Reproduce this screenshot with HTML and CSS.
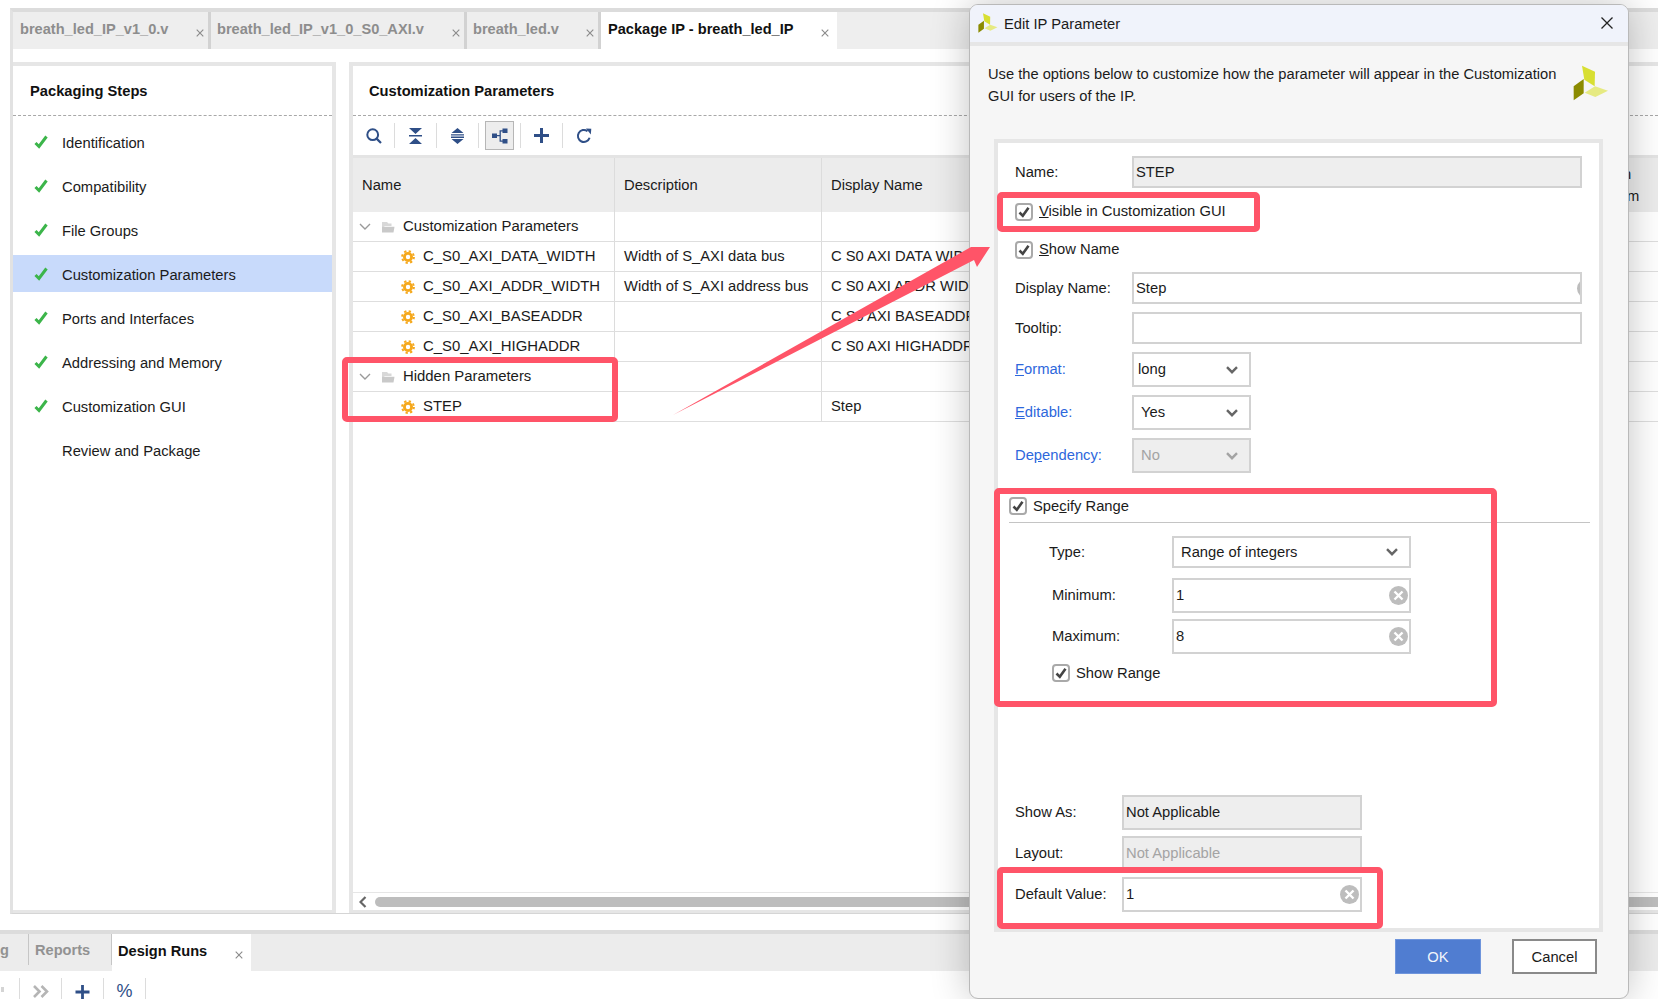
FILE: index.html
```html
<!DOCTYPE html>
<html lang="en">
<head>
<meta charset="utf-8">
<title>Edit IP Parameter</title>
<link rel="stylesheet" href="styles.css">
</head>
<body>
<svg class="defs" width="0" height="0" aria-hidden="true">
  <symbol id="i-check" viewBox="0 0 14 14"><path d="M1.5 8 L5 11.5 L12.5 1.5" fill="none" stroke="#3cb54a" stroke-width="3"/></symbol>
  <symbol id="i-x" viewBox="0 0 8 8"><path d="M.7 .7 L7.3 7.3 M7.3 .7 L.7 7.3" fill="none" stroke="#8a8a8a" stroke-width="1.1"/></symbol>
  <symbol id="i-gear" viewBox="0 0 14 14"><circle cx="7" cy="7" r="3.6" fill="none" stroke="#f5a81c" stroke-width="2.8"/><circle cx="7" cy="7" r="5.9" fill="none" stroke="#f5a81c" stroke-width="2" stroke-dasharray="2.3 2.33"/></symbol>
  <symbol id="i-folder" viewBox="0 0 14 14"><path d="M1 2 H6 L7.5 3.5 H10.5 V6 H4 L1 8 Z" fill="#d8d8d8"/><path d="M1 6.8 H13.5 L12.5 12.5 H1 Z" fill="#c9c9c9"/></symbol>
  <symbol id="i-chev" viewBox="0 0 12 7"><path d="M1 1 L6 6 L11 1" fill="none" stroke="#9a9a9a" stroke-width="1.4"/></symbol>
  <symbol id="i-drop" viewBox="0 0 12 8"><path d="M1 1.2 L6 6.2 L11 1.2" fill="none" stroke="#666" stroke-width="2.4"/></symbol>
  <symbol id="i-clear" viewBox="0 0 19 19"><circle cx="9.5" cy="9.5" r="9.5" fill="#bdbdbd"/><path d="M5.5 5.5 L13.5 13.5 M13.5 5.5 L5.5 13.5" stroke="#fff" stroke-width="2.4"/></symbol>
  <symbol id="i-box" viewBox="0 0 18 18"><rect x="1" y="1" width="16" height="16" rx="3" fill="#fff" stroke="#a9a9a9" stroke-width="2"/><path d="M4.5 9.5 L7.8 12.8 L13.5 4.8" fill="none" stroke="#444" stroke-width="2.6"/></symbol>
  <symbol id="i-logo" viewBox="38 196 108 108"><path d="M65 198 L104 216 L103 260 L72 240 Z" fill="#d8df32"/><path d="M143 273 L105 292 L73 279 L104 260 Z" fill="#e6ea82"/><path d="M70 238 L70 281 L40 302 L40 260 Z" fill="#8b8b00"/></symbol>
  <symbol id="t-search" viewBox="0 0 16 16"><circle cx="6.7" cy="6.7" r="5.4" fill="none" stroke="#2f4f87" stroke-width="2"/><path d="M10.6 10.6 L15 15" stroke="#2f4f87" stroke-width="2.2"/></symbol>
  <symbol id="t-collapse" viewBox="0 0 13 16"><path d="M0 0 H13 L6.5 6 Z M0 7 H13 V8.6 H0 Z M0 16 H13 L6.5 10 Z" fill="#2f4f87"/></symbol>
  <symbol id="t-expand" viewBox="0 0 13 16"><path d="M6.5 0 L12.5 5 H.5 Z M0 6.2 H13 V7.6 H0 Z M0 8.6 H13 V10 H0 Z M.5 11 H12.5 L6.5 16 Z" fill="#2f4f87"/></symbol>
  <symbol id="t-tree" viewBox="0 0 16 16"><path d="M0 5.5 H5 V10 H0 Z M10.5 .5 H15.5 V5 H10.5 Z M10.5 11 H15.5 V15.5 H10.5 Z" fill="#2f4f87"/><path d="M5 7.7 H8.2 V2.8 H11 M8.2 7.7 V13.2 H11" fill="none" stroke="#2f4f87" stroke-width="1.3"/></symbol>
  <symbol id="t-plus" viewBox="0 0 15 15"><path d="M7.5 0 V15 M0 7.5 H15" stroke="#2f4f87" stroke-width="3"/></symbol>
  <symbol id="t-refresh" viewBox="0 0 16 16"><path d="M13.6 9.8 A6 6 0 1 1 11.5 3.2" fill="none" stroke="#2f4f87" stroke-width="2"/><path d="M10 0.5 L15.3 0.8 L14.8 6.4 Z" fill="#2f4f87"/></symbol>
  <symbol id="t-more" viewBox="0 0 16 13"><path d="M1 1 L6.5 6.5 L1 12 M8.5 1 L14 6.5 L8.5 12" fill="none" stroke="#b5b5b5" stroke-width="2.6"/></symbol>
</svg>

<div class="app">
  <section class="editor">
    <div class="tabs">
      <div class="tab tab-a"><span>breath_led_IP_v1_0.v</span><svg class="tab-x"><use href="#i-x"/></svg></div>
      <div class="tab tab-b"><span>breath_led_IP_v1_0_S0_AXI.v</span><svg class="tab-x"><use href="#i-x"/></svg></div>
      <div class="tab tab-c"><span>breath_led.v</span><svg class="tab-x"><use href="#i-x"/></svg></div>
      <div class="tab tab-d tab-active"><span>Package IP - breath_led_IP</span><svg class="tab-x"><use href="#i-x"/></svg></div>
    </div>
    <div class="panels">
      <aside class="steps">
        <h2 class="panel-title">Packaging Steps</h2>
        <ul class="step-list">
          <li class="step"><svg class="step-check"><use href="#i-check"/></svg>Identification</li>
          <li class="step"><svg class="step-check"><use href="#i-check"/></svg>Compatibility</li>
          <li class="step"><svg class="step-check"><use href="#i-check"/></svg>File Groups</li>
          <li class="step step-on"><svg class="step-check"><use href="#i-check"/></svg>Customization Parameters</li>
          <li class="step"><svg class="step-check"><use href="#i-check"/></svg>Ports and Interfaces</li>
          <li class="step"><svg class="step-check"><use href="#i-check"/></svg>Addressing and Memory</li>
          <li class="step"><svg class="step-check"><use href="#i-check"/></svg>Customization GUI</li>
          <li class="step"><span class="step-blank"></span>Review and Package</li>
        </ul>
      </aside>
      <main class="params">
        <h2 class="panel-title panel-title-r">Customization Parameters</h2>
        <div class="toolbar">
          <div class="tool"><svg class="ic16"><use href="#t-search"/></svg></div>
          <div class="tool"><svg class="ic13"><use href="#t-collapse"/></svg></div>
          <div class="tool"><svg class="ic13"><use href="#t-expand"/></svg></div>
          <div class="tool"><span class="tool-on"><svg class="ic16"><use href="#t-tree"/></svg></span></div>
          <div class="tool"><svg class="ic15"><use href="#t-plus"/></svg></div>
          <div class="tool tool-last"><svg class="ic16"><use href="#t-refresh"/></svg></div>
        </div>
        <div class="grid">
          <div class="row row-head"><div class="cell">Name</div><div class="cell">Description</div><div class="cell">Display Name</div><div class="cell cell-tail"><span class="tail-n">n</span><span class="tail-m">m</span></div></div>
          <div class="row"><div class="cell cell-group"><svg class="chev"><use href="#i-chev"/></svg><svg class="folder"><use href="#i-folder"/></svg>Customization Parameters</div><div class="cell"></div><div class="cell"></div><div class="cell"></div></div>
          <div class="row"><div class="cell cell-param"><svg class="gear"><use href="#i-gear"/></svg>C_S0_AXI_DATA_WIDTH</div><div class="cell">Width of S_AXI data bus</div><div class="cell">C S0 AXI DATA WIDTH</div><div class="cell"></div></div>
          <div class="row"><div class="cell cell-param"><svg class="gear"><use href="#i-gear"/></svg>C_S0_AXI_ADDR_WIDTH</div><div class="cell">Width of S_AXI address bus</div><div class="cell">C S0 AXI ADDR WIDTH</div><div class="cell"></div></div>
          <div class="row"><div class="cell cell-param"><svg class="gear"><use href="#i-gear"/></svg>C_S0_AXI_BASEADDR</div><div class="cell"></div><div class="cell">C S0 AXI BASEADDR</div><div class="cell"></div></div>
          <div class="row"><div class="cell cell-param"><svg class="gear"><use href="#i-gear"/></svg>C_S0_AXI_HIGHADDR</div><div class="cell"></div><div class="cell">C S0 AXI HIGHADDR</div><div class="cell"></div></div>
          <div class="row"><div class="cell cell-group"><svg class="chev"><use href="#i-chev"/></svg><svg class="folder"><use href="#i-folder"/></svg>Hidden Parameters</div><div class="cell"></div><div class="cell"></div><div class="cell"></div></div>
          <div class="row"><div class="cell cell-param"><svg class="gear"><use href="#i-gear"/></svg>STEP</div><div class="cell"></div><div class="cell">Step</div><div class="cell"></div></div>
        </div>
        <div class="hscroll"><svg class="hscroll-left" viewBox="0 0 8 12"><path d="M6.5 1 L1.5 6 L6.5 11" fill="none" stroke="#666" stroke-width="2.2"/></svg><div class="hscroll-thumb"></div></div>
      </main>
    </div>
  </section>

  <section class="console">
    <div class="ctabs">
      <div class="ctab ctab-g">g</div>
      <div class="ctab ctab-r">Reports</div>
      <div class="ctab ctab-on"><span>Design Runs</span><svg class="tab-x"><use href="#i-x"/></svg></div>
    </div>
    <div class="ctools">
      <div class="ctool"><span class="ctool-stub"></span></div>
      <div class="ctool"><svg class="ic-more"><use href="#t-more"/></svg></div>
      <div class="ctool"><svg class="ic15"><use href="#t-plus"/></svg></div>
      <div class="ctool ctool-pct">%</div>
    </div>
  </section>
</div>

<div class="dialog">
  <header class="dlg-title">
    <svg class="dlg-logo-s"><use href="#i-logo"/></svg>
    <span class="dlg-name">Edit IP Parameter</span>
    <svg class="dlg-close" viewBox="0 0 12 12"><path d="M.5 .5 L11.5 11.5 M11.5 .5 L.5 11.5" stroke="#222" stroke-width="1.3"/></svg>
  </header>
  <div class="intro">
    <p class="intro-text">Use the options below to customize how the parameter will appear in the Customization GUI for users of the IP.</p>
    <svg class="intro-logo"><use href="#i-logo"/></svg>
  </div>
  <form class="form">
    <div class="f-row f-name"><label class="f-label">Name:</label><div class="field field-off f-wide f-h32">STEP</div></div>
    <label class="f-check f-visible"><svg class="box"><use href="#i-box"/></svg><span><u>V</u>isible in Customization GUI</span></label>
    <label class="f-check f-show"><svg class="box"><use href="#i-box"/></svg><span><u>S</u>how Name</span></label>
    <div class="f-row f-display"><label class="f-label">Display Name:</label><div class="field f-wide f-h32 field-clip">Step<svg class="clear-cut"><use href="#i-clear"/></svg></div></div>
    <div class="f-row f-tooltip"><label class="f-label">Tooltip:</label><div class="field f-wide f-h32"></div></div>
    <div class="f-row f-sel tall"><label class="f-label f-link"><u>F</u>ormat:</label><div class="select s-small">long<svg class="drop"><use href="#i-drop"/></svg></div></div>
    <div class="f-row f-sel tall"><label class="f-label f-link"><u>E</u>ditable:</label><div class="select s-small s-yes">Yes<svg class="drop"><use href="#i-drop"/></svg></div></div>
    <div class="f-row f-sel tall"><label class="f-label f-link">De<u>p</u>endency:</label><div class="select s-small s-yes s-off">No<svg class="drop drop-off"><use href="#i-drop"/></svg></div></div>

    <div class="range-head"><svg class="box"><use href="#i-box"/></svg><span>Spe<u>c</u>ify Range</span></div>
    <div class="r-row r-type"><label class="r-label r-label-t">Type:</label><div class="select s-wide">Range of integers<svg class="drop"><use href="#i-drop"/></svg></div></div>
    <div class="r-row r-min tall"><label class="r-label">Minimum:</label><div class="field r-field">1<svg class="clear"><use href="#i-clear"/></svg></div></div>
    <div class="r-row r-max tall"><label class="r-label">Maximum:</label><div class="field r-field">8<svg class="clear"><use href="#i-clear"/></svg></div></div>
    <label class="f-check r-show"><svg class="box"><use href="#i-box"/></svg><span>Show Range</span></label>

    <div class="f-row b-show tall"><label class="f-label b-label">Show As:</label><div class="field field-off b-field">Not Applicable</div></div>
    <div class="f-row b-next tall"><label class="f-label b-label">Layout:</label><div class="field field-off field-dim b-field">Not Applicable</div></div>
    <div class="f-row b-next tall"><label class="f-label b-label">Default Value:</label><div class="field b-field">1<svg class="clear"><use href="#i-clear"/></svg></div></div>
  </form>
  <div class="buttons">
    <div class="btn btn-ok">OK</div>
    <div class="btn btn-cancel">Cancel</div>
  </div>
</div>

<div class="mark mark-hidden"></div>
<div class="mark mark-visible"></div>
<div class="mark mark-range"></div>
<div class="mark mark-default"></div>
<svg class="arrow" viewBox="0 0 1658 999" aria-hidden="true"><polygon points="673,415 971,247 990,247 977,267 974,260" fill="#ff5468"/></svg>
</body>
</html>
```
FILE: styles.css
```css
* { box-sizing: border-box; }
html, body { margin: 0; padding: 0; }
body {
  position: relative;
  width: 1658px;
  height: 999px;
  overflow: hidden;
  background: #fff;
  color: #1b1b1b;
  font: 14.75px/20px "Liberation Sans", Arial, sans-serif;
}
.defs { position: absolute; }
ul { list-style: none; margin: 0; padding: 0; }
h2, p { margin: 0; }
svg { display: block; flex: none; }

.app { display: flex; flex-direction: column; height: 999px; padding-top: 8px; }

/* editor frame */
.editor {
  margin-left: 10px;
  height: 906px;
  flex: none;
  border-top: 4px solid #dcdcdc;
  border-left: 3px solid #e2e2e2;
  border-bottom: 1px solid #d5d5d5;
  display: flex;
  flex-direction: column;
}
.tabs { display: flex; height: 37px; background: #eeeeee; flex: none; }
.tab {
  display: flex;
  align-items: center;
  padding: 0 7px 3px 7px;
  color: #8d8d8d;
  font-weight: bold;
  font-size: 14.6px;
  border-right: 3px solid #d2d2d2;
}
.tab-a { width: 198px; }
.tab-b { width: 256px; padding-left: 6px; }
.tab-c { width: 134px; padding-left: 6px; }
.tab-d { width: 236px; border-right: 0; }
.tab-active { background: #fff; color: #111; }
.tab-x { width: 8px; height: 8px; margin-left: auto; margin-top: 7px; margin-right: -3px; }
.tab-active .tab-x { margin-right: 1px; }

.panels {
  margin-top: 13px;
  height: 851px;
  display: flex;
  flex: none;
}
.steps {
  width: 323px;
  border-top: 4px solid #e6e6e6;
  border-right: 4px solid #e6e6e6;
  border-bottom: 3px solid #e6e6e6;
}
.panel-title {
  height: 50px;
  padding: 15px 0 0 17px;
  font-size: 14.7px;
  font-weight: bold;
  color: #111;
  border-bottom: 1px dashed #a8a8a8;
}
.panel-title-r { padding-left: 16px; }
.step {
  height: 44px;
  display: flex;
  align-items: center;
  padding-left: 21px;
}
.step:nth-child(1) { margin-top: 5px; }
.step-on { background: #c8dafb; height: 37px; margin: 2px 0 5px; padding-top: 3px; }
.step-check { width: 14px; height: 14px; margin-right: 14px; margin-top: -2px; }
.step-blank { width: 28px; flex: none; }

.params {
  flex: 1;
  margin-left: 13px;
  min-width: 0;
  border-top: 4px solid #e6e6e6;
  border-left: 4px solid #e6e6e6;
  border-bottom: 3px solid #e6e6e6;
  display: flex;
  flex-direction: column;
}
.toolbar { height: 39px; display: flex; align-items: center; flex: none; }
.tool {
  width: 42px;
  height: 25px;
  display: flex;
  align-items: center;
  justify-content: center;
  border-right: 1px solid #dcdcdc;
}
.tool-last { border-right: 0; }
.tool-on {
  width: 29px;
  height: 29px;
  display: flex;
  align-items: center;
  justify-content: center;
  background: #ededed;
  border: 1px solid #b6b6b6;
}
.ic16 { width: 16px; height: 16px; }
.ic13 { width: 13px; height: 16px; }
.ic15 { width: 15px; height: 15px; }

.grid { flex: none; border-top: 3px solid #e4e4e4; }
.row {
  display: grid;
  grid-template-columns: 261px 207px 779px 1fr;
  height: 30px;
  border-bottom: 1px solid #dedede;
}
.row-head { height: 54px; background: #ececec; border-bottom: 0; }
.cell {
  display: flex;
  align-items: center;
  padding-left: 9px;
  padding-bottom: 2px;
  border-left: 1px solid #dcdcdc;
  white-space: nowrap;
  overflow: hidden;
}
.row-head .cell { padding-bottom: 0; }
.cell:first-child { border-left: 0; }
.cell-group { padding-left: 6px; font-size: 14.9px; }
.cell-param { padding-left: 48px; font-size: 14.9px; }
.row-head .cell-tail {
  flex-direction: column;
  align-items: flex-start;
  justify-content: center;
  line-height: 22px;
  padding-left: 0;
  border-left: 0;
}
.tail-n { margin-left: 23px; }
.tail-m { margin-left: 27px; }
.chev { width: 12px; height: 7px; margin-right: 10px; margin-top: 2px; }
.folder { width: 14px; height: 14px; margin-right: 8px; margin-top: 2px; }
.gear { width: 14px; height: 14px; margin-right: 8px; margin-top: 2px; }

.hscroll {
  margin-top: auto;
  height: 18px;
  background: #fff;
  border-top: 1px solid #e6e6e6;
  display: flex;
  align-items: center;
  padding-left: 6px;
}
.hscroll-left { width: 8px; height: 12px; margin-right: 8px; }
.hscroll-thumb { flex: 1; height: 10px; background: #bdbdbd; border-radius: 5px 0 0 5px; }

/* console */
.console { margin-top: 16px; flex: 1; border-top: 4px solid #dcdcdc; display: flex; flex-direction: column; }
.ctabs { display: flex; height: 37px; background: #ececec; flex: none; }
.ctab {
  display: flex;
  align-items: center;
  font-weight: bold;
  font-size: 14.6px;
  color: #929292;
}
.ctab-g { width: 29px; border-right: 1px solid #c6c6c6; height: 31px; }
.ctab-r { width: 83px; padding-left: 6px; border-right: 1px solid #c6c6c6; height: 31px; }
.ctab-on { width: 139px; background: #fff; color: #111; padding: 0 8px 3px 6px; }
.ctab-on .tab-x { margin-right: 0; }
.ctools { display: flex; align-items: flex-start; margin-left: -22px; padding-top: 7px; }
.ctool {
  width: 42px;
  height: 21px;
  display: flex;
  align-items: flex-start;
  justify-content: center;
  padding-top: 7px;
  border-right: 1px solid #dcdcdc;
}
.ctool-stub { width: 3px; height: 5px; background: #d4d4d4; margin: 2px 0 0 8px; }
.ic-more { width: 16px; height: 13px; }
.ctool .ic15 { height: 14px; }
.ctool-pct { color: #2f4f87; font-size: 18px; line-height: 15px; padding-top: 6px; }

/* dialog */
.dialog {
  position: absolute;
  left: 969px;
  top: 4px;
  width: 660px;
  height: 995px;
  background: #f6f6f6;
  border: 1px solid #b9b9b9;
  border-radius: 9px;
  box-shadow: 0 0 38px rgba(0, 0, 0, .24);
  display: flex;
  flex-direction: column;
  overflow: hidden;
}
.dlg-title {
  height: 41px;
  flex: none;
  background: #f0f3fb;
  border-bottom: 4px solid #e6e6e6;
  display: flex;
  align-items: center;
  padding-left: 8px;
}
.dlg-logo-s { width: 20px; height: 20px; margin-right: 6px; margin-top: -2px; }
.dlg-name { flex: 1; }
.dlg-close { width: 12px; height: 12px; margin-right: 15px; margin-top: -2px; }
.intro {
  height: 93px;
  flex: none;
  padding: 17px 19px 0 18px;
  display: flex;
  justify-content: space-between;
  align-items: flex-start;
}
.intro-text { width: 585px; line-height: 22px; font-size: 14.68px; }
.intro-logo { width: 36px; height: 36px; margin-top: 2px; }

.form {
  margin-left: 24px;
  width: 609px;
  height: 793px;
  flex: none;
  background: #fff;
  border: 4px solid #e6e6e6;
  padding: 13px 0 0 17px;
}
.f-row { display: flex; align-items: center; }
.f-label { width: 117px; flex: none; }
.f-link { color: #2e67dc; }
.field {
  position: relative;
  display: flex;
  align-items: center;
  border: 2px solid #d2d2d2;
  background: #fff;
  padding-left: 2px;
  height: 35px;
}
.field-off { background: #eeeeee; }
.field-dim { color: #a4a4a4; }
.field-clip { overflow: hidden; }
.f-wide { width: 450px; }
.f-h32 { height: 32px; }
.f-check { display: flex; align-items: center; height: 18px; }
.box { width: 18px; height: 18px; margin-right: 6px; }
.f-visible { margin-top: 15px; height: 17px; }
.f-visible span, .f-show span { margin-top: -2px; }
.f-show { margin-top: 21px; }
.f-display { margin-top: 13px; }
.f-tooltip { margin-top: 8px; }
.f-sel { margin-top: 8px; }
.select {
  position: relative;
  display: flex;
  align-items: center;
  border: 2px solid #d2d2d2;
  background: #fff;
  padding-left: 4px;
}
.s-small { width: 119px; height: 35px; }
.s-yes { padding-left: 7px; }
.s-off { background: #eeeeee; color: #a4a4a4; }
.s-wide { width: 239px; height: 32px; padding-left: 7px; }
.drop { width: 12px; height: 8px; margin-left: auto; margin-right: 11px; }
.drop-off { opacity: .55; }
.clear { width: 19px; height: 19px; margin-left: auto; margin-right: 1px; }
.clear-cut { position: absolute; right: -16px; top: 5px; width: 19px; height: 19px; }
.tall .f-label, .tall .r-label, .tall .field, .tall .select { padding-bottom: 2px; }
.tall .clear, .tall .drop { margin-top: 2px; }

.range-head {
  margin: 24px 9px 0 -6px;
  padding-bottom: 7px;
  height: 26px;
  display: flex;
  align-items: center;
  border-bottom: 1px solid #c4c4c4;
}
.r-row { display: flex; align-items: center; }
.r-label { width: 157px; padding-left: 37px; flex: none; }
.r-label-t { padding-left: 34px; }
.r-type { margin-top: 13px; }
.r-min { margin-top: 10px; }
.r-max { margin-top: 6px; }
.r-field { width: 239px; }
.r-show { margin: 10px 0 0 37px; }
.b-show { margin-top: 113px; }
.b-next { margin-top: 6px; }
.b-label { width: 107px; }
.b-field { width: 240px; }

.buttons { display: flex; justify-content: flex-end; gap: 31px; margin-top: 7px; padding-right: 31px; flex: none; }
.btn { width: 86px; height: 35px; display: flex; align-items: center; justify-content: center; }
.btn-ok { background: #507dd1; color: #f2f5fb; border: 1px solid #6f95dc; }
.btn-cancel { width: 85px; background: #fff; border: 2px solid #8a8a8a; }

/* annotations drawn over the screenshot */
.mark { position: absolute; border: 6px solid #ff5468; border-radius: 5px; }
.mark-hidden { left: 342px; top: 357px; width: 276px; height: 65px; }
.mark-visible { left: 997px; top: 192px; width: 263px; height: 40px; }
.mark-range { left: 994px; top: 488px; width: 503px; height: 219px; }
.mark-default { left: 997px; top: 867px; width: 386px; height: 62px; }
.arrow { position: absolute; left: 0; top: 0; width: 1658px; height: 999px; pointer-events: none; }
```
